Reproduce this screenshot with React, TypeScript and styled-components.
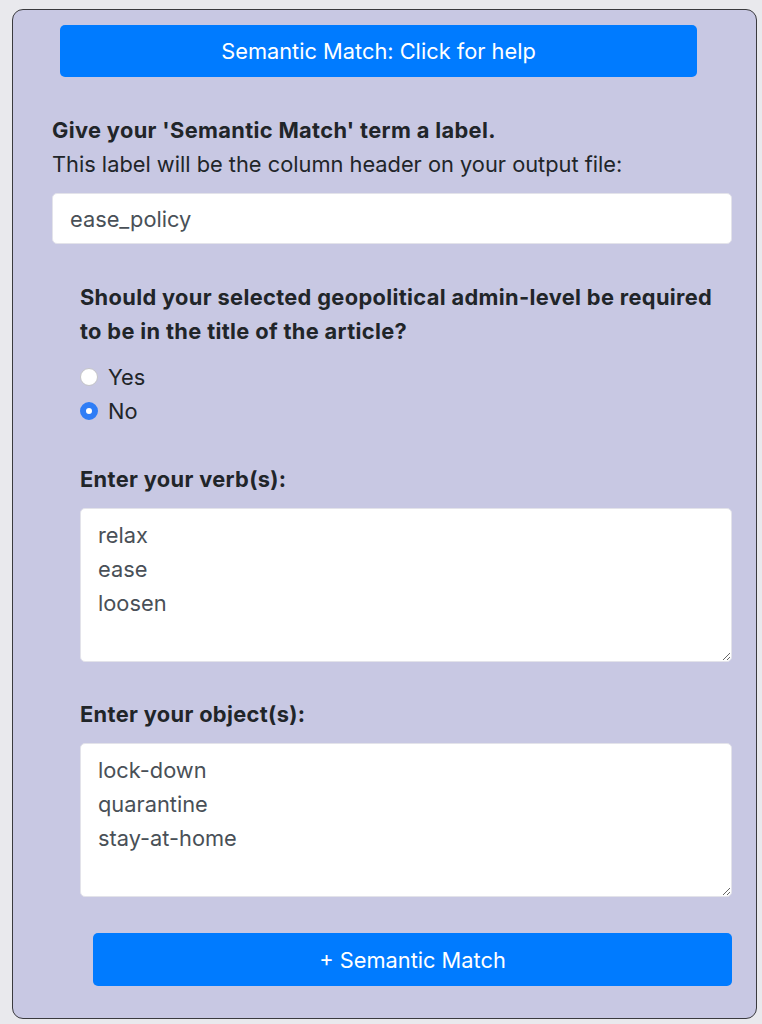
import React from 'react';
import styled, { createGlobalStyle } from 'styled-components';

const GlobalStyle = createGlobalStyle`
  html, body {
    margin: 0;
    padding: 0;
    background: #e9e9ed;
  }
  body {
    font-family: Inter, "Liberation Sans", Arial, sans-serif;
    color: #212529;
  }
`;

const Panel = styled.div`
  box-sizing: border-box;
  margin: 9px 5px 0 12px;
  width: 745px;
  height: 1010px;
  background: #c8c8e3;
  border: 1px solid #3a3a3e;
  border-radius: 11px;
  padding: 15px 24px 0 39px;
  display: flex;
  flex-direction: column;
`;

const Button = styled.button<{ $indent: number; $trim?: number }>`
  box-sizing: border-box;
  display: block;
  margin: 0 ${p => p.$trim ?? 0}px 0 ${p => p.$indent}px;
  height: ${p => (p.$trim ? 52 : 53)}px;
  background: #007bff;
  color: #fff;
  border: none;
  border-radius: 5px;
  font-family: inherit;
  font-size: 21.8px;
  cursor: pointer;
`;

const Bold = styled.div<{ $top: number }>`
  margin-top: ${p => p.$top}px;
  font-size: 21.8px;
  line-height: 34px;
  font-weight: 700;
  letter-spacing: 0.35px;
`;

const Plain = styled.div`
  font-size: 21.8px;
  line-height: 34px;
`;

const TextInput = styled.input`
  box-sizing: border-box;
  margin-top: 12px;
  width: 100%;
  height: 51px;
  border: 1px solid #e3e3ea;
  border-radius: 5px;
  padding: 0 17px;
  font-family: inherit;
  font-size: 21.8px;
  color: #495057;
  background: #fff;
  outline: none;
`;

const Indent = styled.div`
  margin-left: 28px;
  display: flex;
  flex-direction: column;
`;

const Options = styled.div`
  margin-top: 12px;
  display: flex;
  flex-direction: column;
`;

const Option = styled.label`
  display: flex;
  align-items: center;
  gap: 10px;
  font-size: 21.8px;
  line-height: 34px;
  cursor: pointer;
`;

const Radio = styled.input`
  appearance: none;
  margin: 0;
  width: 18px;
  height: 18px;
  border-radius: 50%;
  background: #fff;
  border: 1px solid #c4c4c8;
  box-sizing: border-box;

  &:checked {
    border: 6px solid #2f7df6;
    background: #fff;
  }
`;

const Area = styled.textarea`
  box-sizing: border-box;
  margin-top: 12px;
  width: 100%;
  height: 154px;
  border: 1px solid #e3e3ea;
  border-radius: 5px;
  padding: 9px 17px;
  font-family: inherit;
  font-size: 21.8px;
  line-height: 34px;
  color: #495057;
  background: #fff;
  resize: vertical;
  outline: none;
`;

export default function App() {
  const [required, setRequired] = React.useState('no');

  return (
    <>
      <GlobalStyle />
      <Panel>
        <Button $indent={8} $trim={35}>Semantic Match: Click for help</Button>

        <Bold $top={36}>Give your 'Semantic Match' term a label.</Bold>
        <Plain>This label will be the column header on your output file:</Plain>
        <TextInput defaultValue="ease_policy" />

        <Indent>
          <Bold $top={36}>
            Should your selected geopolitical admin-level be required to be in the title of the article?
          </Bold>
          <Options>
            <Option>
              <Radio type="radio" name="req" checked={required === 'yes'} onChange={() => setRequired('yes')} />
              Yes
            </Option>
            <Option>
              <Radio type="radio" name="req" checked={required === 'no'} onChange={() => setRequired('no')} />
              No
            </Option>
          </Options>

          <Bold $top={34}>Enter your verb(s):</Bold>
          <Area defaultValue={'relax\nease\nloosen'} />

          <Bold $top={35}>Enter your object(s):</Bold>
          <Area defaultValue={'lock-down\nquarantine\nstay-at-home'} />
        </Indent>

        <div style={{ height: 36 }} />
        <Button $indent={41}>+ Semantic Match</Button>
      </Panel>
    </>
  );
}
